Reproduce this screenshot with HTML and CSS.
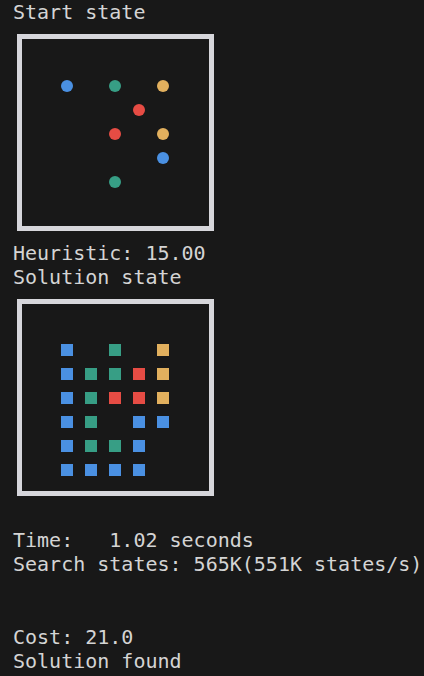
FILE: index.html
```html
<!DOCTYPE html>
<html>
<head>
<meta charset="utf-8">
<link rel="stylesheet" href="styles.css">
</head>
<body>
<div class="out">
  <div class="line">Start state</div>
  <div class="board">
    <svg class="grid" width="187" height="187" viewBox="0 0 187 187">
      <g transform="translate(-5,-5)">
        <circle cx="50" cy="52" r="6" fill="#4a90e2"/>
        <circle cx="98" cy="52" r="6" fill="#379e85"/>
        <circle cx="146" cy="52" r="6" fill="#e2b05e"/>
        <circle cx="122" cy="76" r="6" fill="#e64c44"/>
        <circle cx="98" cy="100" r="6" fill="#e64c44"/>
        <circle cx="146" cy="100" r="6" fill="#e2b05e"/>
        <circle cx="146" cy="124" r="6" fill="#4a90e2"/>
        <circle cx="98" cy="148" r="6" fill="#379e85"/>
      </g>
    </svg>
  </div>
  <div class="line">Heuristic: 15.00</div>
  <div class="line">Solution state</div>
  <div class="board">
    <svg class="grid" width="187" height="187" viewBox="0 0 187 187">
      <g transform="translate(-5,-5)">
        <rect x="44" y="45" width="12" height="12" fill="#4a90e2"/>
        <rect x="92" y="45" width="12" height="12" fill="#379e85"/>
        <rect x="140" y="45" width="12" height="12" fill="#e2b05e"/>

        <rect x="44" y="69" width="12" height="12" fill="#4a90e2"/>
        <rect x="68" y="69" width="12" height="12" fill="#379e85"/>
        <rect x="92" y="69" width="12" height="12" fill="#379e85"/>
        <rect x="116" y="69" width="12" height="12" fill="#e64c44"/>
        <rect x="140" y="69" width="12" height="12" fill="#e2b05e"/>

        <rect x="44" y="93" width="12" height="12" fill="#4a90e2"/>
        <rect x="68" y="93" width="12" height="12" fill="#379e85"/>
        <rect x="92" y="93" width="12" height="12" fill="#e64c44"/>
        <rect x="116" y="93" width="12" height="12" fill="#e64c44"/>
        <rect x="140" y="93" width="12" height="12" fill="#e2b05e"/>

        <rect x="44" y="117" width="12" height="12" fill="#4a90e2"/>
        <rect x="68" y="117" width="12" height="12" fill="#379e85"/>
        <rect x="116" y="117" width="12" height="12" fill="#4a90e2"/>
        <rect x="140" y="117" width="12" height="12" fill="#4a90e2"/>

        <rect x="44" y="141" width="12" height="12" fill="#4a90e2"/>
        <rect x="68" y="141" width="12" height="12" fill="#379e85"/>
        <rect x="92" y="141" width="12" height="12" fill="#379e85"/>
        <rect x="116" y="141" width="12" height="12" fill="#4a90e2"/>

        <rect x="44" y="165" width="12" height="12" fill="#4a90e2"/>
        <rect x="68" y="165" width="12" height="12" fill="#4a90e2"/>
        <rect x="92" y="165" width="12" height="12" fill="#4a90e2"/>
        <rect x="116" y="165" width="12" height="12" fill="#4a90e2"/>
      </g>
    </svg>
  </div>
  <div class="stats">
    <div class="line">Time:   1.02 seconds</div>
    <div class="line">Search states: 565K(551K states/s)</div>
  </div>
  <div class="result">
    <div class="line">Cost: 21.0</div>
    <div class="line">Solution found</div>
  </div>
</div>
</body>
</html>
```

FILE: styles.css
```css
html, body {
  margin: 0;
  padding: 0;
  background: #181818;
}
.out {
  display: flex;
  flex-direction: column;
  align-items: flex-start;
  padding: 0 0 0 13px;
  font-family: "DejaVu Sans Mono", monospace;
  font-size: 20px;
  line-height: 24px;
  color: #d4d4d4;
}
.line {
  white-space: pre;
  height: 24px;
}
.board {
  width: 187px;
  height: 187px;
  border: 5px solid #d6d6db;
  margin: 10px 0 10px 4px;
}
.grid {
  display: block;
}
.stats {
  margin-top: 22px;
}
.result {
  margin-top: 49px;
}
```
